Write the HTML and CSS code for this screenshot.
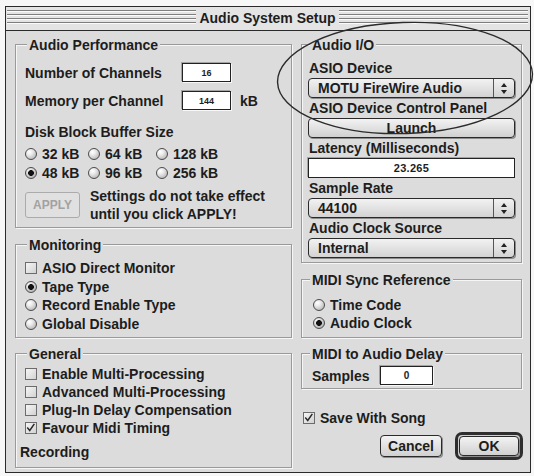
FILE: index.html
```html
<!DOCTYPE html>
<html lang="en">
<head>
<meta charset="utf-8">
<title>Audio System Setup</title>
<link rel="stylesheet" href="styles.css">
</head>
<body>
<div class="window">
  <div class="titlebar">
    <div class="stripes"></div>
    <div class="title">Audio System Setup</div>
    <div class="stripes"></div>
  </div>
  <div class="content">
    <div class="col left">
      <div class="group perf">
        <div class="gtitle">Audio Performance</div>
        <div class="frow r1"><span class="flabel">Number of Channels</span><span class="edit">16</span></div>
        <div class="frow r2"><span class="flabel">Memory per Channel</span><span class="edit">144</span><span class="unit">kB</span></div>
        <div class="disk">Disk Block Buffer Size</div>
        <div class="rgrid">
          <div class="opt"><span class="radio"></span>32 kB</div>
          <div class="opt"><span class="radio"></span>64 kB</div>
          <div class="opt"><span class="radio"></span>128 kB</div>
          <div class="opt"><span class="radio on"></span>48 kB</div>
          <div class="opt"><span class="radio"></span>96 kB</div>
          <div class="opt"><span class="radio"></span>256 kB</div>
        </div>
        <div class="applyrow">
          <span class="btn-dis">APPLY</span>
          <div class="note">Settings do not take effect<br>until you click APPLY!</div>
        </div>
      </div>

      <div class="group mon">
        <div class="gtitle">Monitoring</div>
        <div class="list mlist">
          <div class="opt row"><span class="check"></span>ASIO Direct Monitor</div>
          <div class="opt row"><span class="radio on"></span>Tape Type</div>
          <div class="opt row"><span class="radio"></span>Record Enable Type</div>
          <div class="opt row"><span class="radio"></span>Global Disable</div>
        </div>
      </div>

      <div class="group gen">
        <div class="gtitle">General</div>
        <div class="list glist">
          <div class="opt row"><span class="check"></span>Enable Multi-Processing</div>
          <div class="opt row"><span class="check"></span>Advanced Multi-Processing</div>
          <div class="opt row"><span class="check"></span>Plug-In Delay Compensation</div>
          <div class="opt row"><span class="check"><svg viewBox="0 0 12 12" width="10" height="10"><path d="M1.5 5.5 L4.5 9 L10 1" fill="none" stroke="#2a2a2a" stroke-width="1.8"/></svg></span>Favour Midi Timing</div>
        </div>
        <div class="recording">Recording</div>
      </div>
    </div>

    <div class="col right">
      <div class="group io">
        <div class="gtitle">Audio I/O</div>
        <div class="lbl first">ASIO Device</div>
        <div class="popup"><span class="val">MOTU FireWire Audio</span><span class="arr"><svg viewBox="0 0 6 11" width="6" height="11"><path d="M3 0 L6 4 L0 4Z M0 7 L6 7 L3 11Z" fill="#222"/></svg></span></div>
        <div class="lbl">ASIO Device Control Panel</div>
        <div class="pbtn">Launch</div>
        <div class="lbl">Latency (Milliseconds)</div>
        <div class="lfield">23.265</div>
        <div class="lbl">Sample Rate</div>
        <div class="popup"><span class="val">44100</span><span class="arr"><svg viewBox="0 0 6 11" width="6" height="11"><path d="M3 0 L6 4 L0 4Z M0 7 L6 7 L3 11Z" fill="#222"/></svg></span></div>
        <div class="lbl">Audio Clock Source</div>
        <div class="popup"><span class="val">Internal</span><span class="arr"><svg viewBox="0 0 6 11" width="6" height="11"><path d="M3 0 L6 4 L0 4Z M0 7 L6 7 L3 11Z" fill="#222"/></svg></span></div>
      </div>

      <div class="group sync">
        <div class="gtitle">MIDI Sync Reference</div>
        <div class="list slist">
          <div class="opt row"><span class="radio"></span>Time Code</div>
          <div class="opt row"><span class="radio on"></span>Audio Clock</div>
        </div>
      </div>

      <div class="group delay">
        <div class="gtitle">MIDI to Audio Delay</div>
        <div class="frow drow"><span class="dlabel">Samples</span><span class="edit dedit">0</span></div>
      </div>

      <div class="opt row save"><span class="check"><svg viewBox="0 0 12 12" width="10" height="10"><path d="M1.5 5.5 L4.5 9 L10 1" fill="none" stroke="#2a2a2a" stroke-width="1.8"/></svg></span>Save With Song</div>

      <div class="buttons">
        <span class="pbtn cancel">Cancel</span>
        <span class="ring"><span class="pbtn ok">OK</span></span>
      </div>
    </div>
  </div>
</div>
<svg class="annot" width="534" height="476" viewBox="0 0 534 476">
  <ellipse cx="405" cy="78" rx="127.5" ry="55.5" transform="rotate(-2 405 78)" fill="none" stroke="#2b2b2b" stroke-width="1.4"/>
</svg>
</body>
</html>
```

FILE: styles.css
```css
* { box-sizing: border-box; }
html, body { margin: 0; padding: 0; }
body {
  width: 534px;
  height: 476px;
  overflow: hidden;
  position: relative;
  background: #f7f7f7;
  font-family: "Liberation Sans", Arial, sans-serif;
  font-weight: bold;
  font-size: 14px;
  color: #1d1d1d;
}

.window {
  margin: 6px 0 0 5px;
  width: 526px;
  height: 467px;
  border: 1px solid #2a2a2a;
  background: #dcdcdc;
  display: flex;
  flex-direction: column;
}

.titlebar {
  height: 24px;
  flex: none;
  border-bottom: 1px solid #2a2a2a;
  background: #e4e4e4;
  display: flex;
  padding: 0 2px 0 1px;
}
.stripes {
  flex: 1;
  height: 14px;
  margin-top: 3px;
  background: repeating-linear-gradient(to bottom, #7e7e7e 0 1px, #fbfbfb 1px 2px, transparent 2px 4px);
}
.title { line-height: 23px; padding: 0 3px; }

.content {
  display: flex;
  gap: 9px;
  padding: 13px 0 0 9px;
}
.col { display: flex; flex-direction: column; }
.left { width: 277px; }
.right { width: 221px; }

.group {
  border: 1px solid #9a9a9a;
  box-shadow: 1px 1px 0 #f6f6f6, inset 1px 1px 0 #f6f6f6;
  display: flex;
  flex-direction: column;
  flex: none;
}
.gtitle {
  margin: -8px 0 0 2px;
  line-height: 16px;
  padding: 0 2px;
  background: #dcdcdc;
  align-self: flex-start;
  white-space: nowrap;
}

/* Audio Performance */
.perf { height: 184px; padding: 0 8px 0 9px; }
.frow { display: flex; align-items: center; height: 19px; }
.r1 { margin-top: 10px; }
.r2 { margin-top: 9px; }
.flabel { width: 157px; white-space: nowrap; }
.edit {
  width: 49px;
  height: 19px;
  background: #fff;
  border: 1px solid #222;
  box-shadow: -1px -1px 0 #a4a4a4, 1px 1px 0 #f8f8f8;
  font-size: 9px;
  display: flex;
  align-items: center;
  justify-content: center;
}
.unit { margin-left: 9px; }
.disk { margin-top: 13px; line-height: 18px; }
.rgrid {
  display: grid;
  grid-template-columns: 63px 68px auto;
  grid-auto-rows: 19px;
  margin-top: 3px;
}
.opt { display: flex; align-items: center; gap: 5px; white-space: nowrap; }

.radio {
  width: 12px;
  height: 12px;
  flex: none;
  border-radius: 50%;
  border: 1px solid #4c4c4c;
  background: radial-gradient(circle at 35% 30%, #ffffff 0, #ececec 30%, #a6a6a6 100%);
}
.radio.on {
  background: radial-gradient(circle at 50% 50%, #111 0 2.6px, transparent 3.2px),
              radial-gradient(circle at 35% 30%, #ffffff 0, #e0e0e0 30%, #a0a0a0 100%);
}
.check {
  width: 12px;
  height: 12px;
  flex: none;
  border: 1px solid #6c6c6c;
  background: linear-gradient(135deg, #f6f6f6, #d2d2d2);
  display: flex;
  align-items: center;
  justify-content: center;
}
.check svg { display: block; }

.applyrow { display: flex; align-items: center; margin-top: 5px; height: 36px; }
.btn-dis {
  width: 55px;
  height: 26px;
  flex: none;
  border: 1px solid #ababab;
  border-radius: 3px;
  background: #e0e0e0;
  color: #a2a2a2;
  font-size: 12px;
  display: flex;
  align-items: center;
  justify-content: center;
}
.note { margin-left: 10px; line-height: 18px; white-space: nowrap; }

/* Monitoring / General */
.mon { margin-top: 16px; height: 94px; padding: 0 8px 0 9px; }
.row { height: 18px; }
.mlist { margin-top: 6px; }
.mlist .row { height: 18.5px; }
.gen { margin-top: 15px; height: 115px; padding: 0 8px 0 9px; }
.glist { margin-top: 3px; }
.recording { margin: 6px 0 0 -5px; line-height: 18px; }

/* Audio I/O */
.io { height: 219px; padding: 0 6px; }
.lbl { line-height: 20px; white-space: nowrap; padding-left: 1px; }
.lbl.first { margin-top: 5px; }
.popup {
  display: flex;
  height: 20px;
  border: 1px solid #2a2a2a;
  border-radius: 4px;
  background: linear-gradient(#f2f2f2, #d3d3d3);
  box-shadow: 1px 1px 0 #8c8c8c;
}
.popup .val { flex: 1; padding-left: 9px; line-height: 18px; white-space: nowrap; }
.popup .arr {
  width: 21px;
  border-left: 1px solid #555;
  display: flex;
  align-items: center;
  justify-content: center;
}
.pbtn {
  height: 20px;
  border: 1px solid #2a2a2a;
  border-radius: 4px;
  background: linear-gradient(#f3f3f3, #d0d0d0);
  box-shadow: 1px 1px 0 #8c8c8c;
  text-align: center;
  line-height: 18px;
}
.lfield {
  height: 20px;
  background: #fff;
  border: 1px solid #222;
  box-shadow: -1px -1px 0 #a4a4a4;
  text-align: center;
  font-size: 11px;
  line-height: 18px;
  letter-spacing: 0.3px;
}

/* MIDI Sync */
.sync { margin-top: 16px; height: 59px; padding: 0 6px; }
.slist { margin-top: 8px; margin-left: 5px; }

/* MIDI Delay */
.delay { margin-top: 15px; height: 36px; padding: 0 6px; }
.drow { margin-top: 4px; }
.dlabel { width: 72px; padding-left: 4px; }
.dedit { width: 53px; font-size: 10px; }

.save { margin: 20px 0 0 2px; }

.buttons {
  display: flex;
  justify-content: flex-end;
  align-items: center;
  gap: 13px;
  margin: 5px -1px 0 0;
  height: 28px;
}
.cancel { width: 62px; height: 22px; line-height: 20px; }
.ring {
  width: 68px;
  height: 28px;
  border: 3px solid #2e2e2e;
  border-radius: 7px;
  padding: 0 1px;
  display: flex;
  align-items: center;
  background: #cfcfcf;
}
.ok { flex: 1; height: 20px; }

.annot { position: absolute; left: 0; top: 0; pointer-events: none; }
```
